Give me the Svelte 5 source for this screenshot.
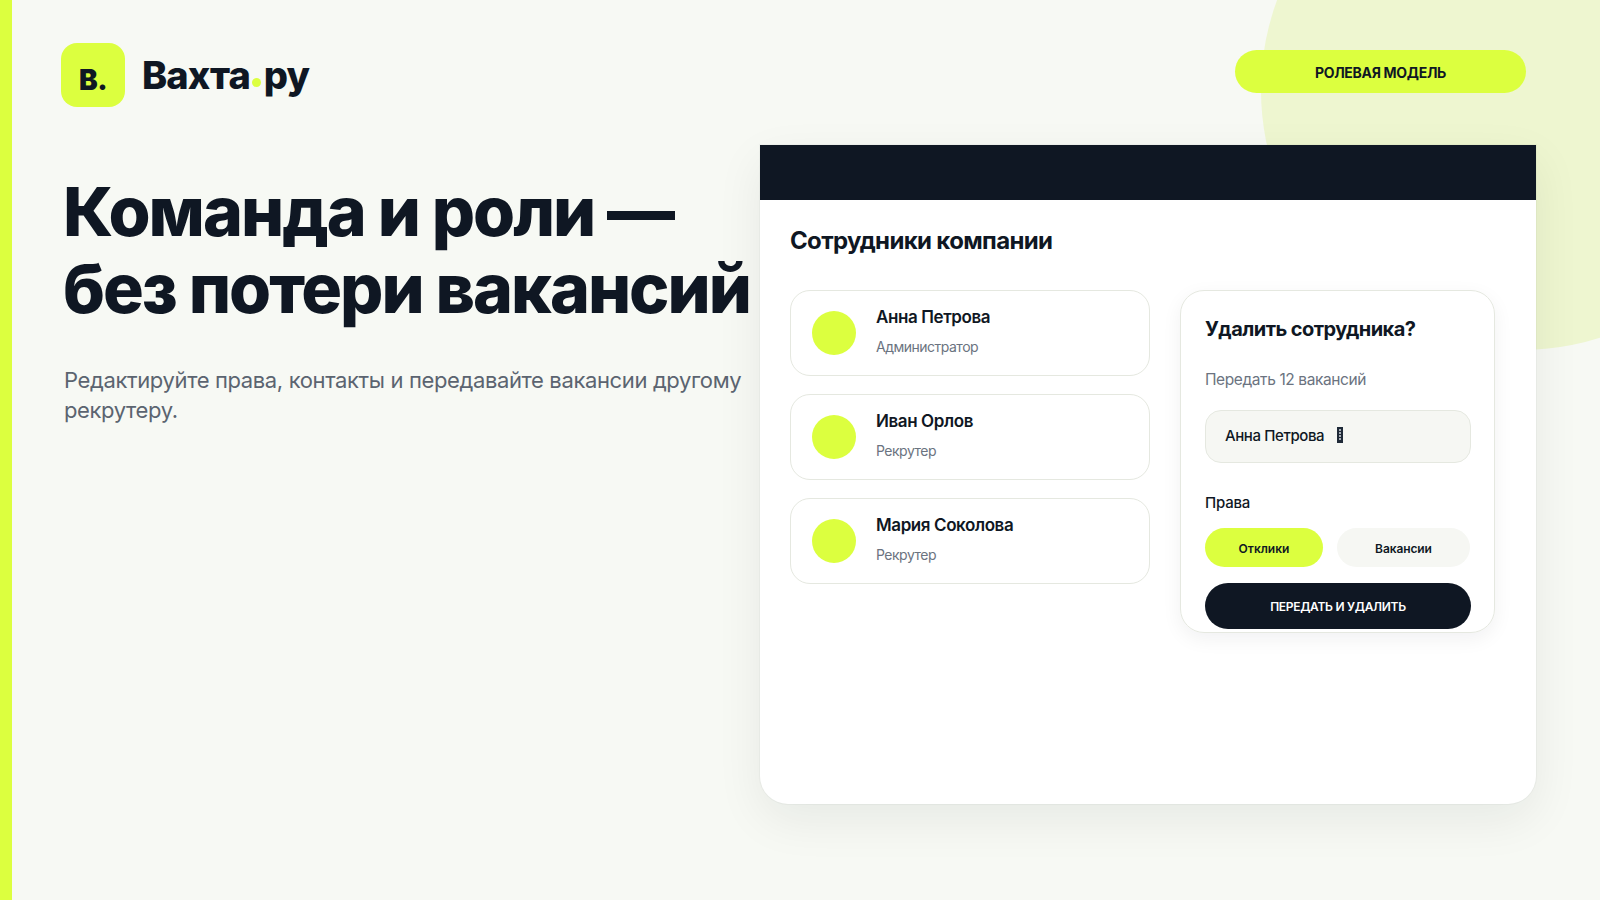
<script lang="ts">
	const employees = [
		{ name: 'Анна Петрова', role: 'Администратор' },
		{ name: 'Иван Орлов', role: 'Рекрутер' },
		{ name: 'Мария Соколова', role: 'Рекрутер' }
	];
</script>

<div class="slide">
	<div class="blob"></div>
	<div class="stripe"></div>

	<section class="intro">
		<div class="logo">
			<div class="mark"><span>В.</span></div>
			<div class="word">Вахта<b></b>ру</div>
		</div>
		<h1>Команда и роли —<br />без потери вакансий</h1>
		<p class="lead">Редактируйте права, контакты и передавайте вакансии другому рекрутеру.</p>
	</section>

	<section class="stage">
		<div class="tag">РОЛЕВАЯ МОДЕЛЬ</div>
		<div class="panel">
			<div class="topbar"></div>
			<div class="content">
				<h2>Сотрудники компании</h2>
				<div class="columns">
					<div class="list">
						{#each employees as person (person.name)}
							<div class="person">
								<div class="avatar"></div>
								<div>
									<div class="name">{person.name}</div>
									<div class="role">{person.role}</div>
								</div>
							</div>
						{/each}
					</div>
					<div class="dialog">
						<h3>Удалить сотрудника?</h3>
						<div class="hint">Передать 12 вакансий</div>
						<div class="select">Анна Петрова <span class="caret"></span></div>
						<div class="rights">Права</div>
						<div class="chips">
							<div class="chip on">Отклики</div>
							<div class="chip">Вакансии</div>
						</div>
						<div class="submit">ПЕРЕДАТЬ И УДАЛИТЬ</div>
					</div>
				</div>
			</div>
		</div>
	</section>
</div>

<style>
	:global(body) {
		margin: 0;
	}
	.slide {
		position: relative;
		display: flex;
		width: 1600px;
		height: 900px;
		overflow: hidden;
		background: #f7f9f4;
		color: #0f1723;
		font-family: Inter, 'Noto Sans', sans-serif;
	}
	.stripe {
		position: absolute;
		left: 0;
		top: 0;
		bottom: 0;
		width: 12px;
		background: #dcff3f;
	}
	.blob {
		position: absolute;
		left: 1261px;
		top: -170px;
		width: 520px;
		height: 520px;
		border-radius: 50%;
		background: #eef6d0;
	}
	.intro {
		position: relative;
		width: 760px;
		flex: none;
		padding: 43px 0 0 61px;
		box-sizing: border-box;
	}
	.logo {
		display: flex;
		align-items: center;
		gap: 17px;
	}
	.mark {
		display: flex;
		align-items: center;
		justify-content: center;
		width: 64px;
		height: 64px;
		padding-top: 10px;
		box-sizing: border-box;
		border-radius: 16px;
		background: #dcff3f;
		font-size: 28px;
		font-weight: 900;
		line-height: 1;
		letter-spacing: -0.5px;
	}
	.word {
		display: flex;
		align-items: baseline;
		font-size: 38px;
		font-weight: 800;
		letter-spacing: -0.9px;
	}
	.word b {
		width: 9px;
		height: 9px;
		margin: 0 2.5px;
		border-radius: 50%;
		background: #dcff3f;
		transform: translateY(-2px);
	}
	h1 {
		margin: 66px 0 0 2px;
		font-size: 68px;
		line-height: 77px;
		font-weight: 800;
		letter-spacing: -2px;
		white-space: nowrap;
	}
	.lead {
		margin: 38px 0 0 3px;
		width: 700px;
		font-size: 22px;
		line-height: 30px;
		letter-spacing: -0.37px;
		color: #5b6470;
	}
	.stage {
		position: relative;
		flex: none;
		width: 776px;
		padding-top: 50px;
	}
	.tag {
		display: flex;
		align-items: center;
		justify-content: center;
		width: 291px;
		height: 43px;
		padding-top: 1px;
		box-sizing: border-box;
		margin: 0 0 0 475px;
		border-radius: 22px;
		background: #dcff3f;
		font-size: 14px;
		font-weight: 700;
		letter-spacing: -0.3px;
	}
	.panel {
		margin-top: 52px;
		height: 659px;
		overflow: hidden;
		border-radius: 0 0 28px 28px;
		background: #fff;
		box-shadow:
			0 0 0 1px rgba(15, 23, 35, 0.03),
			0 16px 48px rgba(15, 23, 35, 0.07);
	}
	.topbar {
		height: 55px;
		background: #0f1723;
	}
	.content {
		padding: 26px 40px 0 30px;
	}
	h2 {
		margin: 0;
		font-size: 24px;
		line-height: 30px;
		font-weight: 700;
		letter-spacing: -0.65px;
	}
	.columns {
		display: flex;
		gap: 30px;
		margin-top: 34px;
		align-items: flex-start;
	}
	.list {
		display: flex;
		flex-direction: column;
		gap: 18px;
		width: 360px;
	}
	.person {
		display: flex;
		align-items: center;
		gap: 20px;
		height: 86px;
		padding: 0 21px;
		box-sizing: border-box;
		border: 1px solid #e5e8e0;
		border-radius: 20px;
	}
	.avatar {
		width: 44px;
		height: 44px;
		border-radius: 50%;
		background: #dcff3f;
	}
	.name {
		margin-top: -4px;
		font-size: 17px;
		line-height: 22px;
		font-weight: 600;
		letter-spacing: -0.4px;
	}
	.role {
		margin-top: 9px;
		font-size: 14px;
		line-height: 20px;
		letter-spacing: -0.5px;
		color: #6b7380;
	}
	.dialog {
		width: 315px;
		height: 343px;
		padding: 25px 23px 0 24px;
		box-sizing: border-box;
		border: 1px solid #e5e8e0;
		border-radius: 24px;
		box-shadow: 0 6px 20px rgba(15, 23, 35, 0.06);
		overflow: hidden;
	}
	h3 {
		margin: 0;
		font-size: 20px;
		line-height: 26px;
		font-weight: 700;
		letter-spacing: -0.55px;
	}
	.hint {
		margin-top: 27px;
		font-size: 15.5px;
		line-height: 22px;
		letter-spacing: -0.4px;
		color: #6b7380;
	}
	.select {
		display: flex;
		align-items: center;
		gap: 13px;
		height: 53px;
		margin-top: 19px;
		padding: 0 19px 3px;
		box-sizing: border-box;
		border: 1px solid #e5e8e0;
		border-radius: 16px;
		background: #f6f7f3;
		font-size: 15px;
		font-weight: 500;
		letter-spacing: -0.4px;
	}
	.caret {
		display: flex;
		justify-content: center;
		width: 6px;
		height: 16px;
		background: #1f2a38;
	}
	.caret::after {
		content: '';
		width: 2px;
		margin: 2px 0;
		background: repeating-linear-gradient(#a9b0b8 0 2px, #1f2a38 2px 3px);
	}
	.rights {
		margin-top: 30px;
		font-size: 15px;
		line-height: 20px;
		font-weight: 500;
		letter-spacing: -0.2px;
	}
	.chips {
		display: flex;
		gap: 14px;
		margin-top: 15px;
	}
	.chip {
		display: flex;
		align-items: center;
		justify-content: center;
		width: 118px;
		height: 39px;
		padding-top: 2px;
		box-sizing: border-box;
		border-radius: 20px;
		background: #f6f7f3;
		font-size: 12px;
		font-weight: 600;
	}
	.chip.on {
		background: #dcff3f;
	}
	.chip:last-child {
		width: 133px;
		letter-spacing: -0.1px;
	}
	.submit {
		display: flex;
		align-items: center;
		justify-content: center;
		height: 46px;
		margin-top: 16px;
		padding-top: 1px;
		box-sizing: border-box;
		border-radius: 23px;
		background: #0f1723;
		color: #fff;
		font-size: 12px;
		font-weight: 600;
		letter-spacing: -0.3px;
	}
</style>
